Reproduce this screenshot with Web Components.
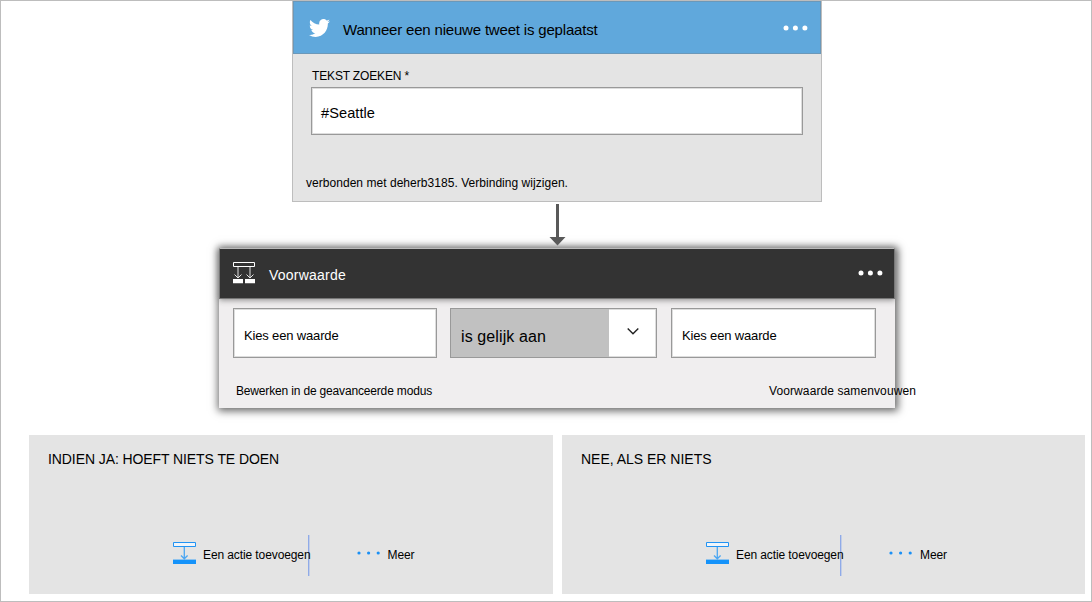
<!DOCTYPE html>
<html lang="nl">
<head>
<meta charset="utf-8">
<title>Werkstroom</title>
<style>
html,body{margin:0;padding:0;height:602px;overflow:hidden;background:#fff}
body{font-family:"Liberation Sans",Arial,sans-serif;color:#000}
</style>
</head>
<body>
<flow-canvas></flow-canvas>
<script>
const define=(name,html,after)=>customElements.define(name,class extends HTMLElement{
  connectedCallback(){
    if(!this.shadowRoot){
      const t=document.createElement('template');
      t.innerHTML=html;
      this.attachShadow({mode:'open'}).append(t.content.cloneNode(true));
    }
    if(after)after(this);
  }
});

/* One line of text, tracked so that it takes up the given width */
define('flow-label',`<style>
:host{display:block;flex:none;white-space:nowrap;font-size:12px;line-height:16px}
span{display:inline-block}
</style><span><slot></slot></span>`,el=>{
  const s=el.shadowRoot.querySelector('span'),w=+el.getAttribute('width');
  s.style.letterSpacing=(w-s.getBoundingClientRect().width)/el.textContent.length+'px';
  el.style.width=w+'px';
});

define('more-dots',`<style>
:host{display:block;flex:none;color:#fff}svg{display:block}
</style><svg width="25" height="6" fill="currentColor"><circle cx="3" cy="3" r="2.5"/><circle cx="12.4" cy="3" r="2.5"/><circle cx="21.9" cy="3" r="2.5"/></svg>`);

define('more-dots-small',`<style>
:host{display:block;flex:none;color:#1b90f5}svg{display:block}
</style><svg width="24" height="4" fill="currentColor"><circle cx="2" cy="2" r="1.6"/><circle cx="11.6" cy="2" r="1.6"/><circle cx="21.2" cy="2" r="1.6"/></svg>`);

define('twitter-icon',`<style>:host{display:block;flex:none}svg{display:block}</style>
<svg width="21" height="18" viewBox="0 2.2 24 19.6" preserveAspectRatio="none" fill="#fff"><path d="M23.95 4.57a10 10 0 0 1-2.82.77 4.96 4.96 0 0 0 2.16-2.72c-.95.55-2 .95-3.13 1.18a4.92 4.92 0 0 0-8.38 4.48C7.69 8.1 4.07 6.13 1.64 3.16a4.8 4.8 0 0 0-.67 2.48c0 1.71.87 3.21 2.19 4.1a4.9 4.9 0 0 1-2.23-.62v.06a4.92 4.92 0 0 0 3.95 4.83 5 5 0 0 1-2.21.08 4.94 4.94 0 0 0 4.6 3.42A9.87 9.87 0 0 1 0 19.54a14 14 0 0 0 7.55 2.21c9.05 0 14-7.5 14-13.98 0-.21 0-.42-.02-.63a9.94 9.94 0 0 0 2.42-2.57z"/></svg>`);

define('condition-icon',`<style>:host{display:block;flex:none}svg{display:block}</style>
<svg width="22" height="22" fill="none" stroke="#fff"><path d="M.5.5h21v4H.5z"/><path stroke="#e2e2e2" d="M5 5v11M17 5v11M1.5 12.5 5 16l3.5-3.5M13.5 12.5 17 16l3.5-3.5"/><path stroke="none" fill="#fff" d="M0 17h10v4.3H0zM12 17h10v4.3H12z"/></svg>`);

define('action-icon',`<style>:host{display:block;flex:none}svg{display:block}</style>
<svg width="23" height="22" fill="none" stroke="#2193f3"><path fill="#f0f5fa" d="M.5.5h22v4H.5z"/><path stroke="#4ba6f2" stroke-width="1.3" d="M11.3 5v12M8 13.5l3.3 3.3 3.3-3.3"/><path stroke="none" fill="#1593fa" d="M0 17.6h23V22H0z"/></svg>`);

define('value-box',`<style>
:host{display:flex;box-sizing:border-box;flex:none;background:#fff;border:1px solid #999;box-shadow:inset 0 0 0 1px #ddd}
</style><slot></slot>`);

define('flow-arrow',`<style>:host{display:block;flex:none;height:42px;margin:2px 0 0 546px}svg{display:block}</style>
<svg width="20" height="42"><path fill="#595959" d="M9 0h3v33h6.5l-8 8.5-8-8.5H9z"/></svg>`);

define('trigger-card',`<style>
:host{display:block;box-sizing:border-box;flex:none;width:530px;height:201px;margin-left:291px;background:#e4e4e4;border:1px solid #bdbdbd;border-top:0}
header{display:flex;box-sizing:border-box;height:53px;background:#60a8dc;border:1px solid #6b98b9;padding-left:15px}
twitter-icon{margin-top:17px}
header flow-label{font-size:15px;line-height:20px;margin:18px 0 0 13px}
more-dots{margin:23px 12.5px 0 auto}
.field{padding:14px 0 0 19px}
value-box{width:492px;height:48px;margin:3px 0 0 -1px}
value-box flow-label{font-size:14.6px;line-height:20px;margin:15px 0 0 9px}
.conn{margin:40px 0 0 13px}
</style>
<header><twitter-icon></twitter-icon><flow-label width="254.5">Wanneer een nieuwe tweet is geplaatst</flow-label><more-dots></more-dots></header>
<div class="field"><flow-label width="97">TEKST ZOEKEN *</flow-label>
<value-box><flow-label width="54">#Seattle</flow-label></value-box></div>
<flow-label class="conn" width="262">verbonden met deherb3185. Verbinding wijzigen.</flow-label>`);

define('condition-card',`<style>
:host{display:block;box-sizing:border-box;flex:none;width:676px;height:160px;margin:2px 0 0 218px;background:#f0eeef;box-shadow:1px 1px 8px 2px #666}
header{display:flex;box-sizing:border-box;height:51px;background:#333;border:1px solid #777;border-top-color:#bbb;padding-left:12.5px;box-shadow:0 1px 6px #888}
condition-icon{margin-top:13px}
header flow-label{font-size:14px;line-height:18px;color:#fff;margin:17px 0 0 14.5px}
more-dots{margin:21px 11.5px 0 auto}
.row{display:flex;gap:14px;padding:9px 0 0 14px}
value-box{width:204px;height:50px}
value-box flow-label{font-size:13px;line-height:18px;margin:18px 0 0 10px}
.op{width:207px;margin-left:-1px}
.op .sel{width:158px;background:#c1c1c1;display:flex}
.op flow-label{font-size:16px;line-height:20px;margin:18px 0 0 10px}
.op svg{margin:18px 0 0 18px}
.links{display:flex;padding:25px 0 0 17px}
.links flow-label:last-child{margin-left:337px}
</style>
<header><condition-icon></condition-icon><flow-label width="77">Voorwaarde</flow-label><more-dots></more-dots></header>
<div class="row"><value-box><flow-label width="94.5">Kies een waarde</flow-label></value-box>
<value-box class="op"><div class="sel"><flow-label width="85">is gelijk aan</flow-label></div><svg width="12" height="9" fill="none" stroke="#222" stroke-width="1.4"><path d="M.7 1.4 6 6.7l5.3-5.3"/></svg></value-box>
<value-box style="width:205px"><flow-label width="94.5">Kies een waarde</flow-label></value-box></div>
<div class="links"><flow-label width="196">Bewerken in de geavanceerde modus</flow-label><flow-label width="147">Voorwaarde samenvouwen</flow-label></div>`);

define('branch-panel',`<style>
:host{display:block;box-sizing:border-box;flex:none;height:159px;background:#e4e4e4;padding:15px 0 0 19px}
.title{display:block;height:18px}
.actions{display:flex;margin:67px 0 0 125px}
action-icon{margin-top:7px}
.add{position:relative;z-index:1;margin:12px -2.5px 0 7px}
i{width:1px;height:41px;background:#8faae8;border-right:1px solid #c3cee6;flex:none;margin-left:var(--rule-shift,-.5px)}
more-dots-small{margin:16px 0 0 47px}
.more{margin:12px 0 0 7px}
</style>
<div class="title"><slot></slot></div>
<div class="actions"><action-icon></action-icon><flow-label class="add" width="107.5">Een actie toevoegen</flow-label><i></i><more-dots-small></more-dots-small><flow-label class="more" width="27">Meer</flow-label></div>`);

define('flow-canvas',`<style>
:host{display:flex;flex-direction:column;box-sizing:border-box;width:1092px;height:602px;border:1px solid #bdbdbd;overflow:hidden;background:#fff}
.branches{display:flex;gap:9px;margin:27px 0 0 28px}
branch-panel{width:524px}
branch-panel:last-child{width:523px;--rule-shift:-1px}
branch-panel flow-label{font-size:14px;line-height:18px}
</style>
<trigger-card></trigger-card><flow-arrow></flow-arrow><condition-card></condition-card>
<div class="branches"><branch-panel><flow-label width="231">INDIEN JA: HOEFT NIETS TE DOEN</flow-label></branch-panel>
<branch-panel><flow-label width="130.5">NEE, ALS ER NIETS</flow-label></branch-panel></div>`);
</script>
</body>
</html>
